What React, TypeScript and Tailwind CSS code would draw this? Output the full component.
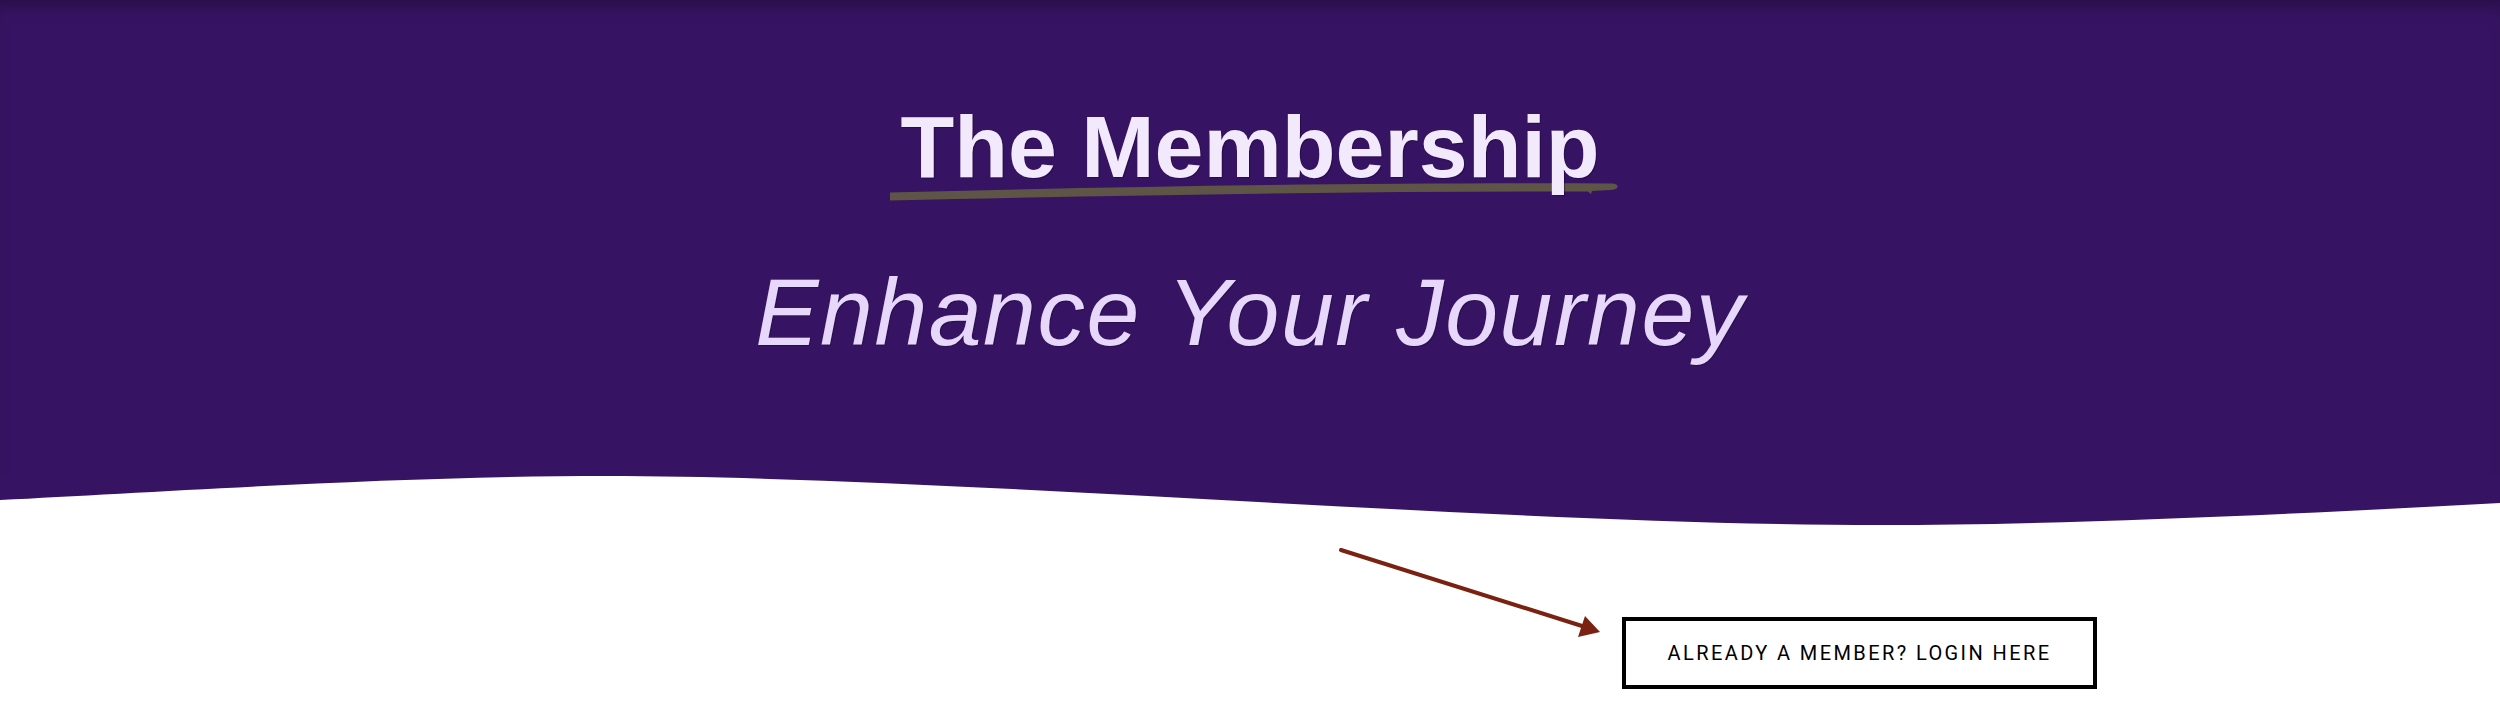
import React from 'react';

const App: React.FC = () => {
  return (
    <div className="min-h-screen bg-white" style={{ fontFamily: '"Liberation Sans", Arial, sans-serif' }}>
      {/* Hero banner */}
      <header className="h-[476px] bg-[#371463] shadow-[inset_0_14px_18px_-10px_rgba(0,0,0,0.35)] flex flex-col items-center pt-[103px]">
        <h1 className="relative inline-block text-[88px] leading-none font-bold text-[#f2eafc] [text-shadow:1px_1px_1px_rgba(20,0,40,0.45)]">
          {/* brush stroke under the heading */}
          <svg
            className="absolute left-[-12px] top-[78px] w-[730px] h-[22px]"
            viewBox="0 0 730 22"
            aria-hidden="true"
          >
            <path
              d="M2 11.5 C 250 5 500 1.5 724 2.5 Q 730 3 729.5 6 Q 729 8.5 722 9 L 704 10 L 703 13 L 700 10.5 C 480 10 250 14 2 19.5 Z"
              fill="#5f5547"
            />
          </svg>
          <span className="relative">The Membership</span>
        </h1>
        <p className="mt-[74px] text-[95px] leading-none italic tracking-[1.5px] text-[#e7d7fb] [text-shadow:1px_1px_1px_rgba(20,0,40,0.35)]">
          Enhance Your Journey
        </p>
      </header>

      {/* wavy bottom edge of the banner */}
      <svg className="block w-full h-[50px]" viewBox="0 0 2500 50" preserveAspectRatio="none" aria-hidden="true">
        <path
          d="M0 0 H2500 V27 C 2300 38 2060 49 1881 49 C 1500 49 950 0 606 0 C 400 0 160 16 0 24 Z"
          fill="#371463"
        />
      </svg>

      {/* login call-out */}
      <div className="flex items-start pl-[1338px] pt-[21px]">
        <svg className="w-[264px] h-[92px] shrink-0" viewBox="0 0 264 92" aria-hidden="true">
          <line x1="3" y1="3" x2="244" y2="79" stroke="#7b2112" strokeWidth="4" strokeLinecap="round" />
          <polygon points="262,85 240,90 247,69" fill="#7b2112" />
        </svg>
        <a
          href="#"
          className="ml-[20px] mt-[70px] w-[475px] h-[72px] shrink-0 border-[4px] border-black flex items-center justify-center text-[20px] tracking-[2.4px] text-black uppercase"
          style={{ fontFamily: 'Roboto, "Liberation Sans", sans-serif' }}
        >
          Already a member? Login here
        </a>
      </div>
    </div>
  );
};

export default App;
